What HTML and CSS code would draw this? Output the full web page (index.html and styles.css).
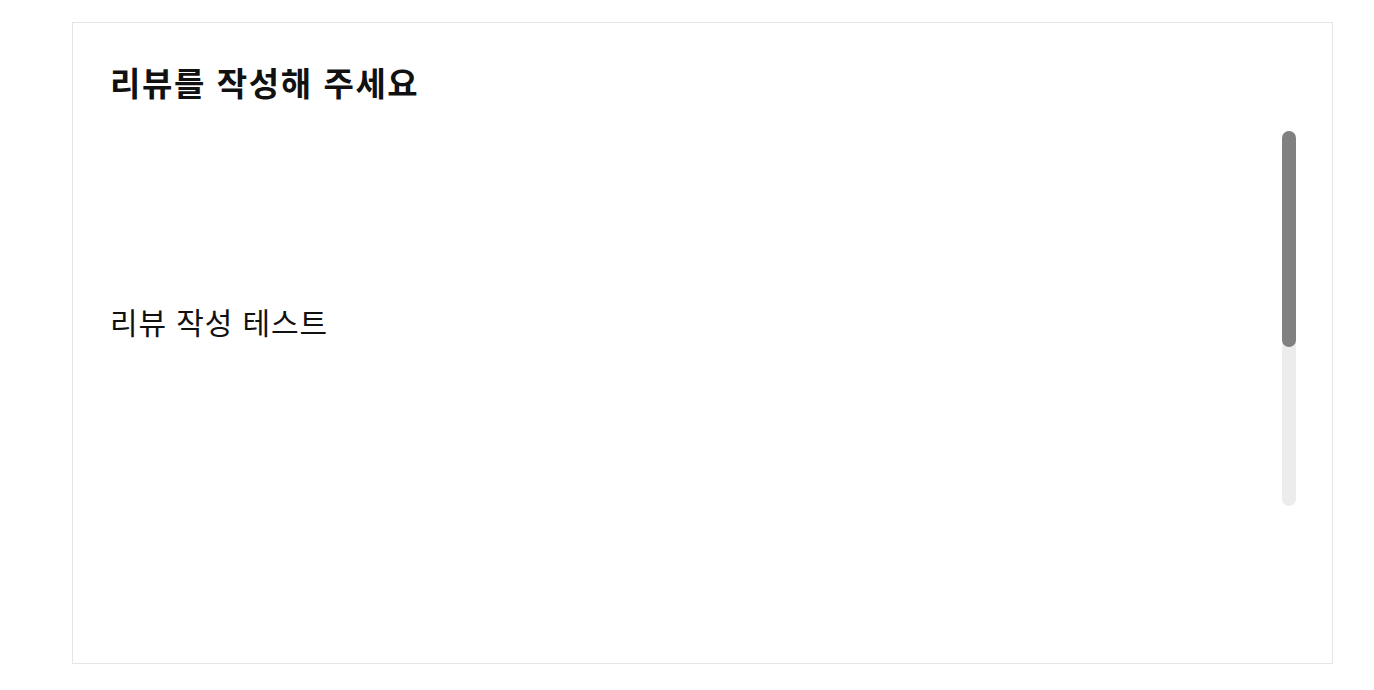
FILE: index.html
```
<!DOCTYPE html>
<html lang="ko">
<head>
<meta charset="utf-8">
<link rel="stylesheet" href="styles.css">
</head>
<body>
<div class="page">
  <section class="card">
    <h1 class="title">리뷰를 작성해 주세요</h1>
    <div class="editor">
      <div class="editor-body">
        <p class="editor-text">리뷰 작성 테스트</p>
      </div>
      <div class="scroll-track"><div class="scroll-thumb"></div></div>
    </div>
  </section>
</div>
</body>
</html>
```
FILE: styles.css
```
* { box-sizing: border-box; }
html, body { margin: 0; padding: 0; background: #fff; }
body { font-family: "Noto Sans CJK KR", "Noto Sans", sans-serif; color: #111; }
.page { padding: 22px 41px 0 72px; }
.card {
  width: 1261px;
  height: 642px;
  border: 1px solid #e5e5e5;
  padding: 0 36px 0 37px;
  display: flex;
  flex-direction: column;
}
.title {
  margin: 0;
  padding-top: 35px;
  font-size: 33px;
  font-weight: 700;
  line-height: 48px;
  letter-spacing: 1.6px;
  color: #111;
}
.editor {
  margin-top: 25px;
  display: flex;
  height: 375px;
}
.editor-body {
  flex: 1;
  display: flex;
  align-items: center;
}
.editor-text {
  margin: 0;
  font-size: 30px;
  line-height: 40px;
  letter-spacing: 0.9px;
  padding-top: 4px;
  color: #111;
}
.scroll-track {
  width: 14px;
  height: 375px;
  background: #ececec;
  border-radius: 7px;
}
.scroll-thumb {
  height: 216px;
  background: #808080;
  border-radius: 7px;
}
```
